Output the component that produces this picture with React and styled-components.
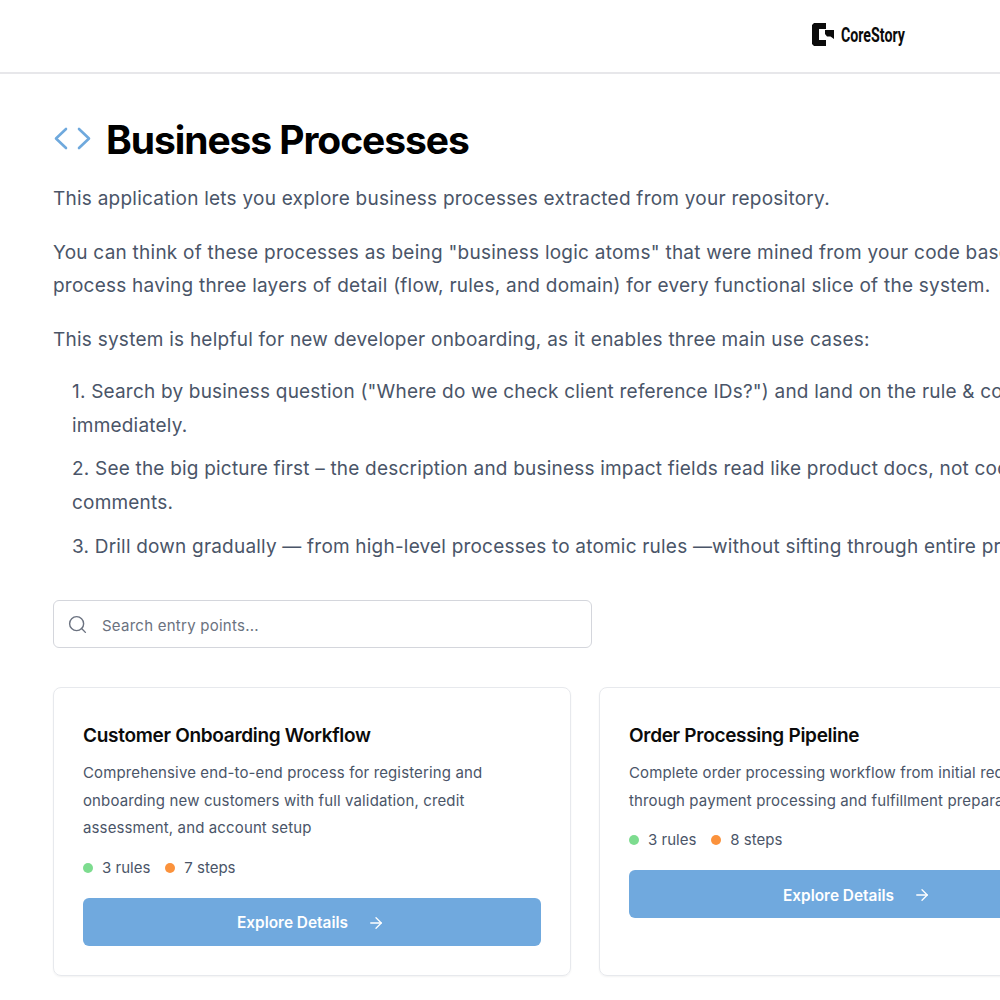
import styled, { createGlobalStyle } from 'styled-components';
import { ArrowRight, Search } from 'lucide-react';

const cards = [
  {
    title: 'Customer Onboarding Workflow',
    lines: [
      'Comprehensive end-to-end process for registering and',
      'onboarding new customers with full validation, credit',
      'assessment, and account setup',
    ],
    rules: 3,
    steps: 7,
  },
  {
    title: 'Order Processing Pipeline',
    lines: [
      'Complete order processing workflow from initial request',
      'through payment processing and fulfillment preparation',
    ],
    rules: 3,
    steps: 8,
  },
];

const App = () => (
  <Page>
    <GlobalStyle />
    <Header>
      <Logo>
        <svg width="22" height="23" viewBox="0 0 22 23" fill="#0b0b0b">
          <path d="M2 0H14V6H7V17H14V23H2L0 21V2Z" />
          <path d="M13 7H22V16L18.5 13.5H15L13 11Z" />
        </svg>
        <LogoText>CoreStory</LogoText>
      </Logo>
    </Header>
    <Main>
      <TitleRow>
        <svg width="37" height="23" viewBox="0 0 37 23" fill="none" stroke="#6fa9dd" strokeWidth="2.6" strokeLinecap="round" strokeLinejoin="round">
          <path d="M12 2L2 11.5L12 21" />
          <path d="M25 2L35 11.5L25 21" />
        </svg>
        <Title>Business Processes</Title>
      </TitleRow>
      <Paragraph>This application lets you explore business processes extracted from your repository.</Paragraph>
      <Paragraph>
        You can think of these processes as being "business logic atoms" that were mined from your code base, with each
        <br />
        process having three layers of detail (flow, rules, and domain) for every functional slice of the system.
      </Paragraph>
      <Paragraph>This system is helpful for new developer onboarding, as it enables three main use cases:</Paragraph>
      <UseCases>
        <li>
          1. Search by business question ("Where do we check client reference IDs?") and land on the rule &amp; code
          <br />
          immediately.
        </li>
        <li>
          2. See the big picture first – the description and business impact fields read like product docs, not code
          <br />
          comments.
        </li>
        <li>3. Drill down gradually — from high-level processes to atomic rules —without sifting through entire programs.</li>
      </UseCases>
      <SearchBox>
        <Search size={21} strokeWidth={1.6} color="#6b7280" />
        <SearchInput placeholder="Search entry points..." />
      </SearchBox>
      <CardGrid>
        {cards.map((card) => (
          <Card key={card.title}>
            <CardTitle>{card.title}</CardTitle>
            <CardText>
              {card.lines.map((line) => (
                <span key={line}>{line}</span>
              ))}
            </CardText>
            <Stats>
              <Stat>
                <Dot $color="#7ddc8f" />
                {card.rules} rules
              </Stat>
              <Stat>
                <Dot $color="#fb923c" />
                {card.steps} steps
              </Stat>
            </Stats>
            <ExploreButton>
              Explore Details
              <ArrowRight size={18} strokeWidth={1.75} />
            </ExploreButton>
          </Card>
        ))}
      </CardGrid>
    </Main>
  </Page>
);

//STYLING
const GlobalStyle = createGlobalStyle`
  html, body {
    margin: 0;
    overflow: hidden;
    background: #fff;
  }
`;

const Page = styled.div`
  width: 1000px;
  height: 1000px;
  overflow: hidden;
  font-family: 'Inter', 'Liberation Sans', sans-serif;
`;

const Header = styled.header`
  display: flex;
  justify-content: flex-end;
  align-items: center;
  height: 72px;
  padding-right: 95px;
  border-bottom: 2px solid #e7e7ea;
`;

const Logo = styled.div`
  display: flex;
  align-items: center;
  gap: 7px;
  margin-top: -4px;
`;

const LogoText = styled.span`
  display: block;
  width: 64px;
  margin-top: 1px;
  font-family: 'Roboto', sans-serif;
  font-size: 20px;
  font-weight: 700;
  white-space: nowrap;
  color: #0b0b0b;
  transform: scaleX(0.71);
  transform-origin: left center;
`;

const Main = styled.main`
  width: 1100px;
  padding: 40px 0 0 53px;
`;

const TitleRow = styled.div`
  display: flex;
  align-items: center;
  gap: 15px;
  height: 50px;
  margin: 0 0 18px 1px;

  svg {
    margin-top: -2px;
  }
`;

const Title = styled.h1`
  margin: 0;
  font-size: 39px;
  font-weight: 700;
  letter-spacing: -1.07px;
  color: #000;
`;

const Paragraph = styled.p`
  margin: 0 0 21px;
  font-size: 19px;
  line-height: 33px;
  letter-spacing: 0.24px;
  color: #4a5568;
  white-space: nowrap;
`;

const UseCases = styled.ul`
  list-style: none;
  margin: -2px 0 37px;
  padding: 0 0 0 19px;
  font-size: 19px;
  line-height: 33.6px;
  letter-spacing: 0.2px;
  color: #4a5568;
  white-space: nowrap;

  li {
    margin-bottom: 10.2px;
  }
`;

const SearchBox = styled.div`
  display: flex;
  align-items: center;
  gap: 14px;
  box-sizing: border-box;
  width: 539px;
  height: 48px;
  padding: 0 13px;
  border: 1px solid #d4d6dc;
  border-radius: 6px;
`;

const SearchInput = styled.input`
  flex: 1;
  border: 0;
  outline: 0;
  padding: 2px 0 0;
  font-family: inherit;
  font-size: 15px;
  letter-spacing: 0.25px;
  color: #4a5568;

  &::placeholder {
    color: #6b7280;
  }
`;

const CardGrid = styled.div`
  display: grid;
  grid-template-columns: 518px 518px;
  gap: 28px;
  margin-top: 39px;
  align-items: stretch;
`;

const Card = styled.article`
  display: flex;
  flex-direction: column;
  box-sizing: border-box;
  height: 289px;
  padding: 34px 29px 29px;
  border: 1px solid #e7e9ed;
  border-radius: 8px;
  box-shadow: 0 1px 2px rgba(0, 0, 0, 0.05);
`;

const CardTitle = styled.h2`
  margin: 0 0 9px;
  font-size: 19px;
  line-height: 28px;
  font-weight: 600;
  letter-spacing: -0.3px;
  color: #0b0b0b;
`;

const CardText = styled.p`
  display: flex;
  flex-direction: column;
  margin: 0 0 14px;
  font-size: 15px;
  line-height: 27.5px;
  letter-spacing: 0.13px;
  color: #4a5568;
  white-space: nowrap;
`;

const Stats = styled.div`
  display: flex;
  gap: 15px;
  margin-bottom: 18px;
`;

const Stat = styled.span`
  display: flex;
  align-items: center;
  gap: 9px;
  font-size: 15px;
  line-height: 24px;
  color: #4a5568;
`;

const Dot = styled.span`
  width: 10px;
  height: 10px;
  border-radius: 50%;
  background: ${(props) => props.$color};
`;

const ExploreButton = styled.button`
  display: flex;
  align-items: center;
  justify-content: center;
  gap: 19px;
  height: 48px;
  padding: 2px 2px 0 0;
  border: 0;
  border-radius: 6px;
  background: #70a9de;
  color: #fff;
  font-family: inherit;
  font-size: 15.4px;
  font-weight: 600;
`;

export default App;
